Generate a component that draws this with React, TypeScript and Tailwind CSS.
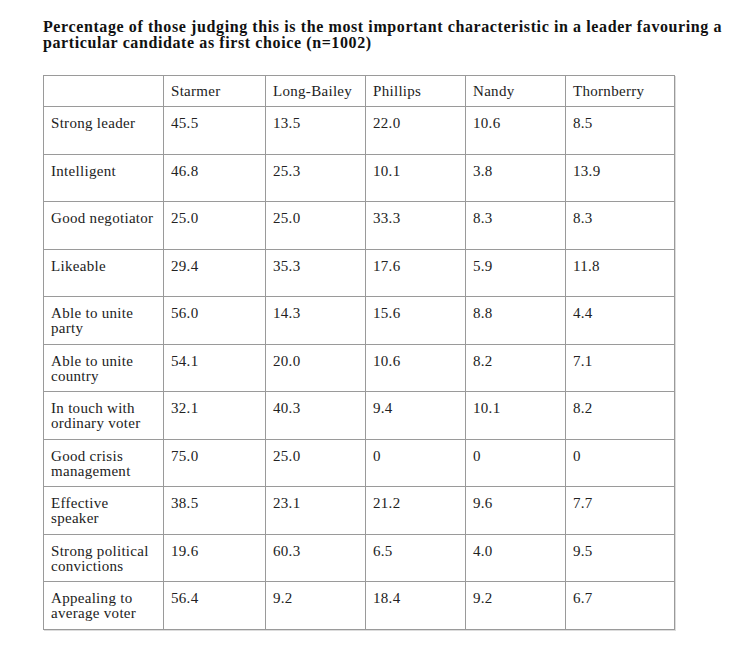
const columns = ["Starmer", "Long-Bailey", "Phillips", "Nandy", "Thornberry"];

const rows: { label: string[]; values: string[] }[] = [
  { label: ["Strong leader"], values: ["45.5", "13.5", "22.0", "10.6", "8.5"] },
  { label: ["Intelligent"], values: ["46.8", "25.3", "10.1", "3.8", "13.9"] },
  { label: ["Good negotiator"], values: ["25.0", "25.0", "33.3", "8.3", "8.3"] },
  { label: ["Likeable"], values: ["29.4", "35.3", "17.6", "5.9", "11.8"] },
  { label: ["Able to unite", "party"], values: ["56.0", "14.3", "15.6", "8.8", "4.4"] },
  { label: ["Able to unite", "country"], values: ["54.1", "20.0", "10.6", "8.2", "7.1"] },
  { label: ["In touch with", "ordinary voter"], values: ["32.1", "40.3", "9.4", "10.1", "8.2"] },
  { label: ["Good crisis", "management"], values: ["75.0", "25.0", "0", "0", "0"] },
  { label: ["Effective", "speaker"], values: ["38.5", "23.1", "21.2", "9.6", "7.7"] },
  { label: ["Strong political", "convictions"], values: ["19.6", "60.3", "6.5", "4.0", "9.5"] },
  { label: ["Appealing to", "average voter"], values: ["56.4", "9.2", "18.4", "9.2", "6.7"] },
];

const colWidths = ["w-[120px]", "w-[102px]", "w-[100px]", "w-[100px]", "w-[100px]", "w-[109px]"];

export default function App() {
  return (
    <div className="min-h-[651px] w-[754px] bg-white pl-[43px] pt-[19px] font-['Liberation_Serif',serif]">
      <h1 className="text-[16px] font-bold leading-[15.5px] tracking-[0.6px] text-[#111]">
        Percentage of those judging this is the most important characteristic in a leader favouring a
        <br />
        particular candidate as first choice (n=1002)
      </h1>

      <table className="mt-[25px] table-fixed border-collapse text-[15px] leading-[15px] tracking-[0.3px] text-[#222] shadow-[1px_1px_0_#dcdcdc]">
        <colgroup>
          {colWidths.map((w, i) => (
            <col key={i} className={w} />
          ))}
        </colgroup>
        <thead>
          <tr className="h-[31px]">
            <th className="border border-[#9a9a9a]" />
            {columns.map((c) => (
              <th key={c} className="border border-[#9a9a9a] px-[7px] text-left align-middle font-normal">
                {c}
              </th>
            ))}
          </tr>
        </thead>
        <tbody>
          {rows.map((r) => (
            <tr key={r.label.join(" ")} className="h-[47.5px]">
              <td className="border border-[#9a9a9a] px-[7px] pt-[9px] align-top">
                {r.label.map((l, i) => (
                  <div key={i}>{l}</div>
                ))}
              </td>
              {r.values.map((v, i) => (
                <td key={i} className="border border-[#9a9a9a] px-[7px] pt-[9px] align-top">
                  {v}
                </td>
              ))}
            </tr>
          ))}
        </tbody>
      </table>
    </div>
  );
}
